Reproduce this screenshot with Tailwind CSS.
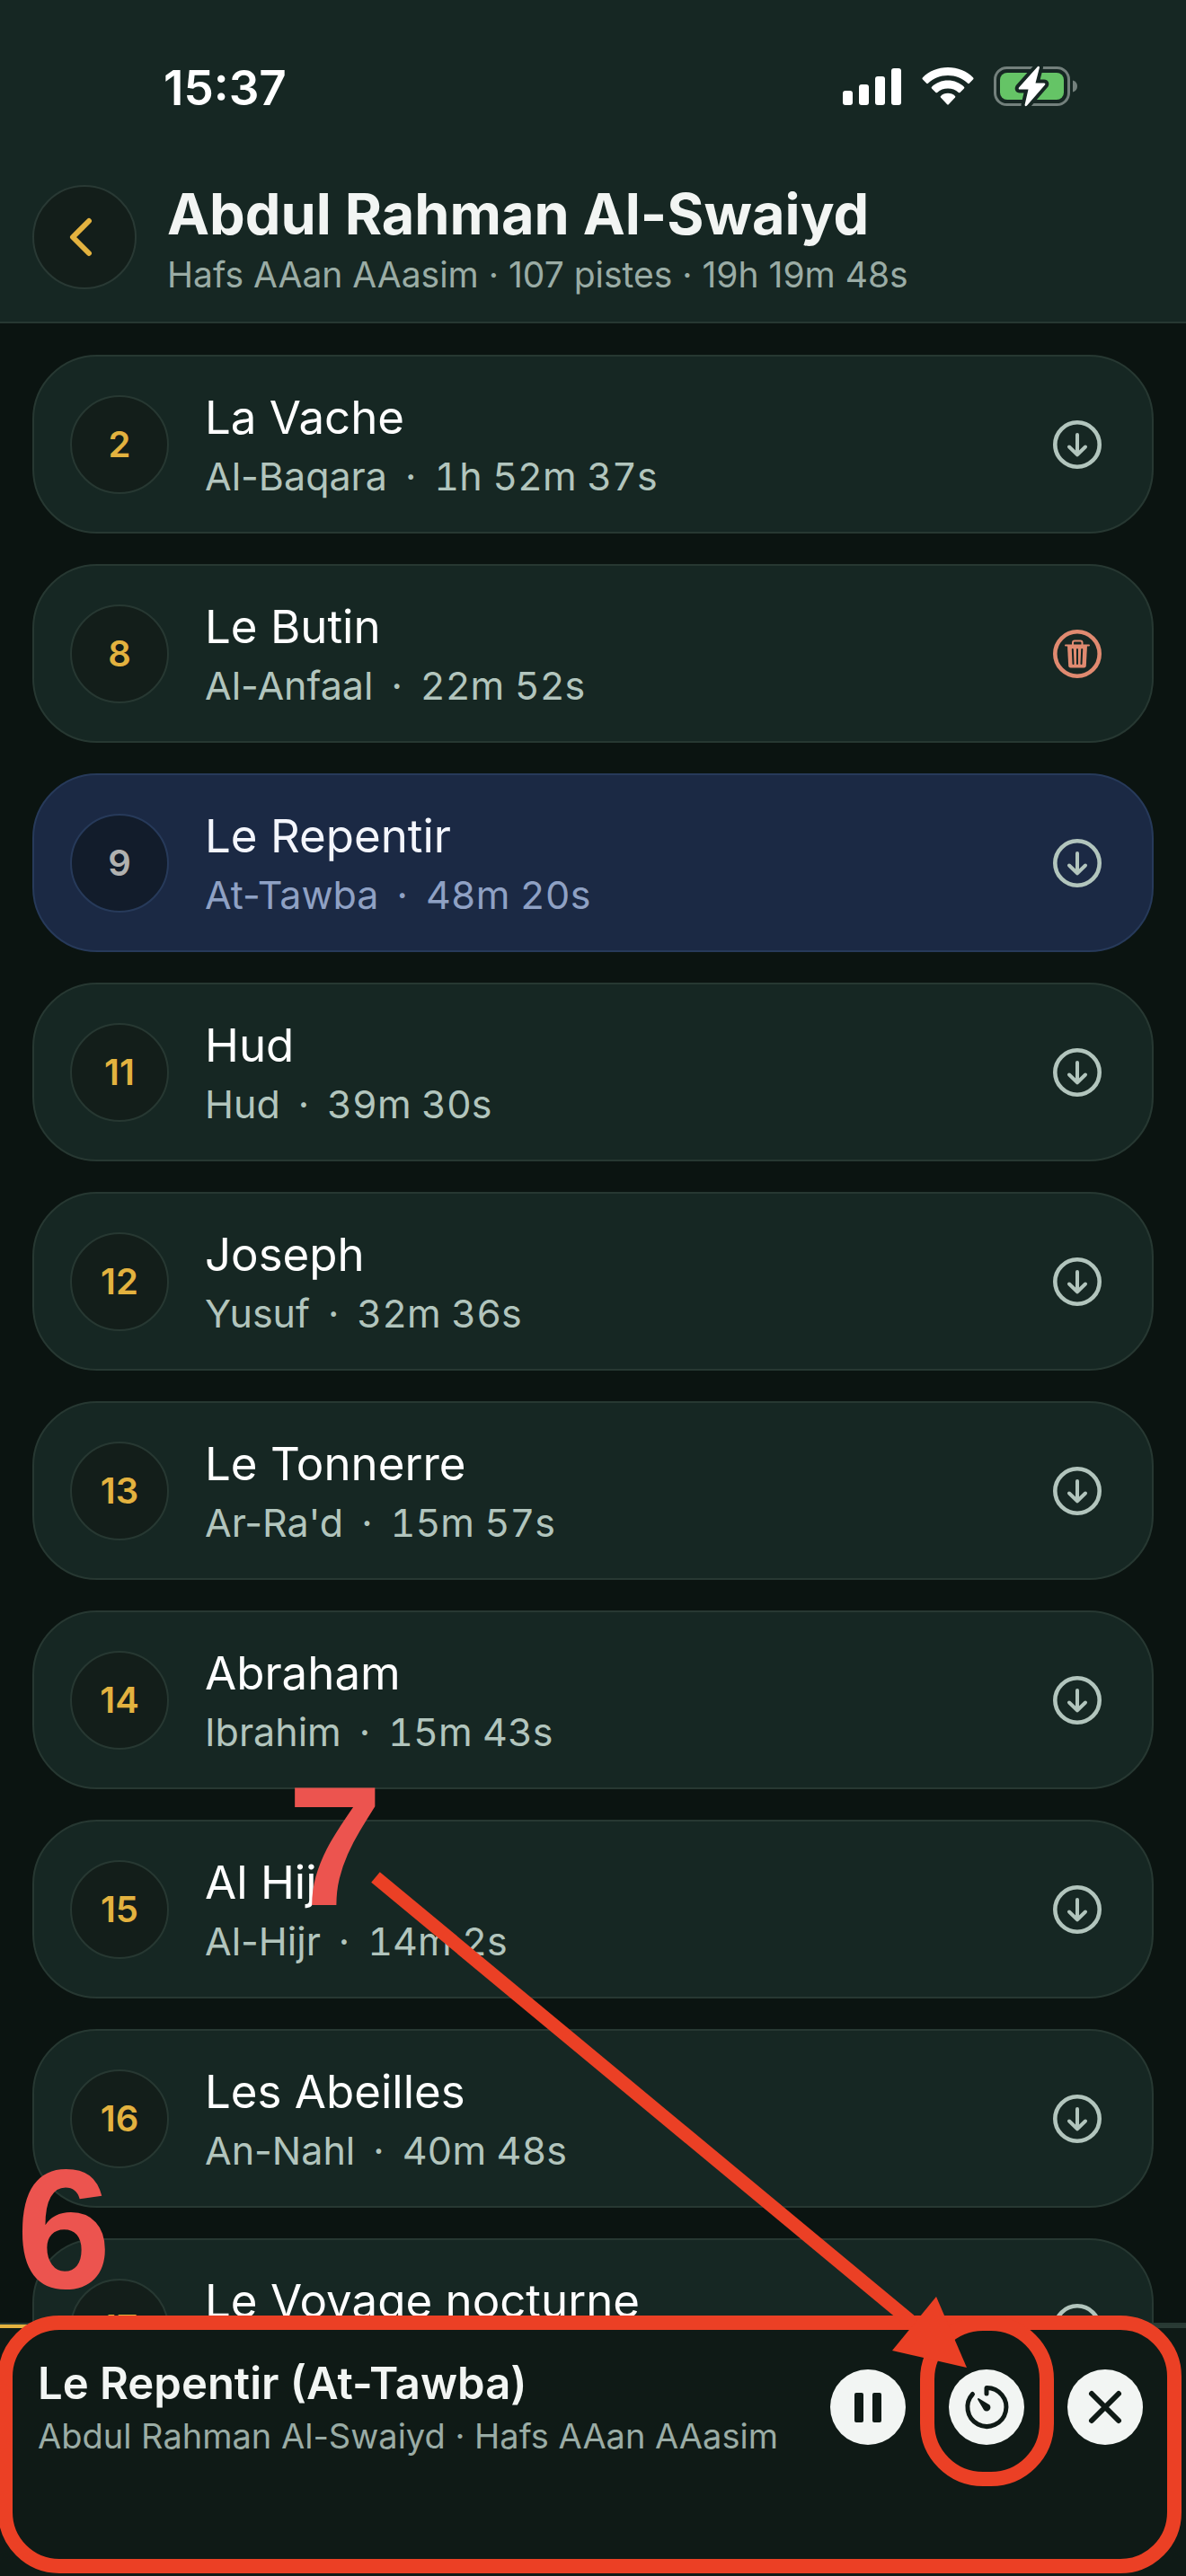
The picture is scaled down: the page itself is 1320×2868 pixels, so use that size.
<!DOCTYPE html>
<html lang="fr">
<head>
  <meta charset="UTF-8" />
  <meta name="viewport" content="width=device-width, initial-scale=1.0"/>
  <title>Abdul Rahman Al-Swaiyd</title>
  <script src="https://cdn.jsdelivr.net/npm/@tailwindcss/browser@4"></script>
</head>
<body class="relative flex h-screen flex-col overflow-hidden bg-[#0b1411] font-['Inter','Liberation_Sans',sans-serif] text-white">

<!-- Header -->
<header class="border-b-2 border-[#273832] bg-[#162723]">
  <!-- Status bar -->
  <div class="flex h-[206px] items-start justify-between pt-[66px] pr-[120px] pl-[182px]">
    <span class="text-[53px] leading-[64px] font-semibold">15:37</span>
    <div class="flex h-[60px] items-center gap-[22px]">
      <svg class="h-[42px] w-[66px]" viewBox="0 0 66 42" fill="#fff" aria-hidden="true">
        <rect x="0" y="26" width="11" height="16" rx="3"/>
        <rect x="18" y="19" width="11" height="23" rx="3"/>
        <rect x="36" y="10" width="11" height="32" rx="3"/>
        <rect x="54" y="1" width="11" height="41" rx="3"/>
      </svg>
      <svg class="h-[42px] w-[58px]" viewBox="0 0 58 42" fill="#fff" aria-hidden="true">
        <path d="M29 0C18 0 8 4 0.8 11.5Q0 12.4 0.8 13.3L5.2 17.8Q6 18.6 6.9 17.8C12.800 12 20.500 9 29 9S45.200 12 51.100 17.800Q52 18.600 52.800 17.800L57.200 13.300Q58 12.400 57.200 11.500C50 4 40 0 29 0Z"/>
        <path d="M29 14.500C22 14.500 15.700 17.200 11 21.700Q10.200 22.600 11 23.400L15.500 27.900Q16.300 28.600 17.200 27.900C20.400 25 24.500 23.500 29 23.500S37.600 25 40.800 27.900Q41.700 28.600 42.500 27.900L47 23.400Q47.800 22.600 47 21.700C42.300 17.200 36 14.500 29 14.500Z"/>
        <path d="M29 28.800C25.800 28.800 23 30 21 31.900Q20.200 32.700 21 33.600L28.200 41.300Q29 42 29.800 41.300L37 33.600Q37.800 32.700 37 31.900C35 30 32.200 28.800 29 28.800Z"/>
      </svg>
      <svg class="h-[48px] w-[94px]" viewBox="0 0 94 48" aria-hidden="true">
        <rect x="1.500" y="3.500" width="82" height="41" rx="13" fill="none" stroke="#73807c" stroke-width="3"/>
        <path d="M88 17.500C91.500 18.500 93 21 93 24S91.500 29.500 88 30.500Z" fill="#73807c"/>
        <rect x="7" y="9" width="71" height="30" rx="8" fill="#65c466"/>
        <path d="M49 2L28 25.500Q27 27.500 29 27.500H38.500L34.500 45Q35 47 37 45.500L57 22.500Q58 20.500 56 20.500H46.500L51 3Q50.500 1 49 2Z" fill="#fff" stroke="#162723" stroke-width="8" stroke-linejoin="round" paint-order="stroke"/>
      </svg>
    </div>
  </div>
  <div class="flex items-start gap-[34px] px-[36px] pb-[26px]">
    <button type="button" aria-label="Retour" class="flex size-[116px] shrink-0 items-center justify-center rounded-full border-2 border-[#293934] bg-[#131e1a]">
      <svg class="size-[48px]" viewBox="0 0 48 48" fill="none" stroke="#e3b23f" stroke-width="6" stroke-linecap="round" stroke-linejoin="round"><path d="M29 6L11 24L29 42"/></svg>
    </button>
    <div class="min-w-0">
      <h1 class="text-[63px] leading-[64px] font-bold whitespace-nowrap text-[#f2f5f3]">Abdul Rahman Al-Swaiyd</h1>
      <p class="mt-[10px] text-[39px] leading-[52px] text-[#9aaca5]">Hafs AAan AAasim · 107 pistes · 19h 19m 48s</p>
    </div>
  </div>
</header>

<!-- Track list -->
<main class="min-h-0 flex-1 overflow-y-auto px-[36px] pt-[35px] [scrollbar-width:none]">
  <ul id="tracks" class="flex flex-col gap-[34px]"></ul>
</main>

<!-- Player -->
<footer class="border-t-2 border-[#273832] bg-[#0f1a16]">
  <div class="h-[4px] bg-[#2a3b35]"><div class="h-full w-[5%] bg-[#e3b23f]"></div></div>
  <div class="flex items-center gap-[48px] pt-[30px] pr-[48px] pb-[130px] pl-[42px]">
    <div class="min-w-0 flex-1">
      <h2 class="text-[49px] leading-[64px] font-semibold whitespace-nowrap text-[#f2f5f3]">Le Repentir (At-Tawba)</h2>
      <p class="text-[38px] leading-[52px] whitespace-nowrap text-[#9aaca5]">Abdul Rahman Al-Swaiyd · Hafs AAan AAasim</p>
    </div>
    <button type="button" aria-label="Pause" class="flex size-[84px] shrink-0 items-center justify-center rounded-full bg-[#f2f5f3]">
      <svg class="size-[84px]" viewBox="0 0 84 84" fill="#0f1a16"><rect x="27" y="26" width="10" height="33" rx="2"/><rect x="47" y="26" width="10" height="33" rx="2"/></svg>
    </button>
    <button type="button" aria-label="Minuterie" class="flex size-[84px] shrink-0 items-center justify-center rounded-full bg-[#f2f5f3]">
      <svg class="size-[84px]" viewBox="0 0 84 84" fill="none" stroke="#0f1a16" stroke-width="5" stroke-linecap="round" stroke-linejoin="round">
        <path d="M42 27V20.500A21.500 21.500 0 1 1 26.500 27.500"/>
        <path d="M33 33L44.500 40A3.200 3.200 0 1 1 39.800 44.500Z" fill="#0f1a16" stroke-width="2"/>
      </svg>
    </button>
    <button type="button" aria-label="Fermer" class="flex size-[84px] shrink-0 items-center justify-center rounded-full bg-[#f2f5f3]">
      <svg class="size-[84px]" viewBox="0 0 84 84" fill="none" stroke="#0f1a16" stroke-width="6" stroke-linecap="round"><path d="M27 27L57 57M57 27L27 57"/></svg>
    </button>
  </div>
</footer>

<!-- Annotations -->
<div class="pointer-events-none absolute inset-0 overflow-hidden font-['Liberation_Sans',sans-serif] font-bold text-[#ec544f]">
  <span class="absolute top-[1960px] left-[320px] text-[190px] leading-[190px]">7</span>
  <span class="absolute top-[2386px] left-[18px] text-[190px] leading-[190px]">6</span>
  <svg class="absolute inset-0 h-full w-full" viewBox="0 0 1320 2868" fill="none" stroke="#eb4025" stroke-width="16">
    <rect x="6" y="2586" width="1301" height="271" rx="60"/>
    <rect x="1032" y="2587" width="133" height="173" rx="62"/>
    <path d="M418 2090L1030 2598" stroke-width="15"/>
    <path d="M1042 2557L1076 2636L993 2617Z" fill="#eb4025" stroke="none"/>
  </svg>
</div>

<script>
const tracks = [
  { n: 2, title: "La Vache", name: "Al-Baqara", time: "1h 52m 37s" },
  { n: 8, title: "Le Butin", name: "Al-Anfaal", time: "22m 52s", saved: true },
  { n: 9, title: "Le Repentir", name: "At-Tawba", time: "48m 20s", playing: true },
  { n: 11, title: "Hud", name: "Hud", time: "39m 30s" },
  { n: 12, title: "Joseph", name: "Yusuf", time: "32m 36s" },
  { n: 13, title: "Le Tonnerre", name: "Ar-Ra'd", time: "15m 57s" },
  { n: 14, title: "Abraham", name: "Ibrahim", time: "15m 43s" },
  { n: 15, title: "Al Hijr", name: "Al-Hijr", time: "14m 2s" },
  { n: 16, title: "Les Abeilles", name: "An-Nahl", time: "40m 48s" },
  { n: 17, title: "Le Voyage nocturne" }
]

const downloadIcon = `
  <svg class="size-[54px]" viewBox="0 0 54 54" fill="none" stroke="#b2c5bd" stroke-width="4" stroke-linecap="round" stroke-linejoin="round">
    <circle cx="27" cy="27" r="24.700" stroke-width="4.600"/>
    <path d="M27 16V38M18 29.500L27 38.300L36 29.500"/>
  </svg>`

const trashIcon = `
  <svg class="size-[54px]" viewBox="0 0 54 54" fill="none" stroke="#e08a70" stroke-linecap="round" stroke-linejoin="round">
    <circle cx="27" cy="27" r="24.700" stroke-width="4.600"/>
    <path d="M14 17.500H40" stroke-width="2"/>
    <path d="M22 17V14.500Q22 12.500 24 12.500H30.500Q32.500 12.500 32.500 14.500V17" stroke-width="2"/>
    <path d="M16 18H38L36.800 40.500Q36.600 42.500 34.500 42.500H19.500Q17.400 42.500 17.200 40.500Z" fill="#e08a70" stroke="none"/>
    <path d="M21.800 22L22.500 38M27 22V38M32.200 22L31.500 38" stroke="#162723" stroke-width="2"/>
  </svg>`

const list = document.getElementById("tracks")

tracks.forEach(t => {
  const card = t.playing ? "border-[#273a5a] bg-[#1b2944]" : "border-[#273832] bg-[#162723]"
  const badge = t.playing ? "border-[#273a5a] bg-[#121c2b] text-[#b0b1b0]" : "border-[#273832] bg-[#131e1a] text-[#e3b23f]"
  const title = t.playing ? "text-[#f4f6fd]" : "text-white"
  const sub = t.playing ? "text-[#8fa1c4]" : "text-[#b2c5bd]"
  const details = t.name ? `<span>${t.name}</span><span>·</span><span class="tabular-nums">${t.time}</span>` : ""

  const li = document.createElement("li")
  li.innerHTML = `
    <div class="flex items-center rounded-[72px] border-2 px-[40px] py-[32px] ${card}">
      <span class="flex size-[110px] shrink-0 items-center justify-center rounded-full border-2 text-[40px] font-semibold ${badge}">${t.n}</span>
      <div class="ml-[40px] min-w-0 flex-1">
        <h3 class="text-[51px] leading-[72px] ${title}">${t.title}</h3>
        <p class="flex h-[59px] gap-[20px] text-[43px] leading-[59px] ${sub}">${details}</p>
      </div>
      <button type="button" class="mr-[16px] shrink-0" aria-label="${t.saved ? "Supprimer" : "Télécharger"}">${t.saved ? trashIcon : downloadIcon}</button>
    </div>`
  list.appendChild(li)
})
</script>

</body>
</html>
